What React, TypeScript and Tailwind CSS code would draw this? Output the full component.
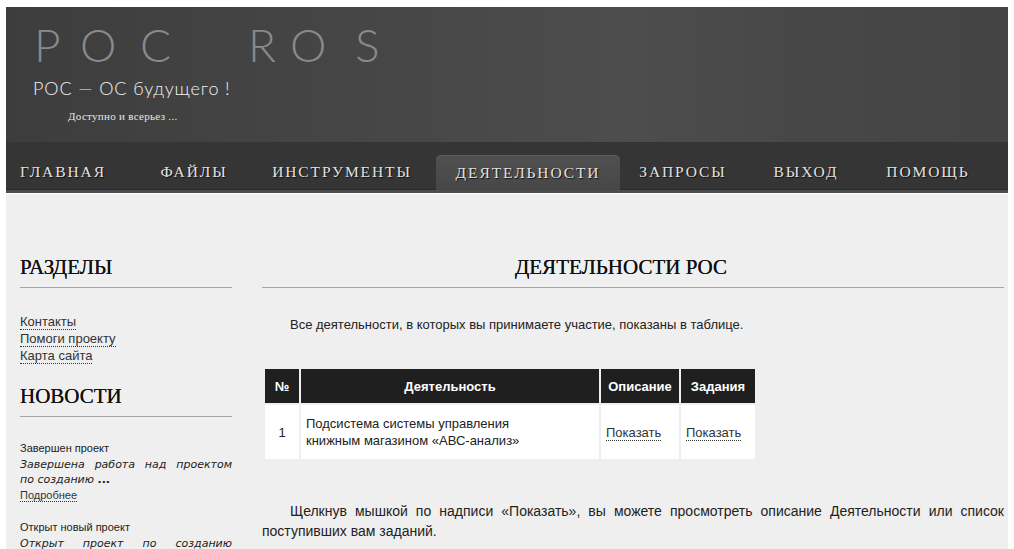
import type { ReactNode } from 'react';

const navItems = [
  { label: 'ГЛАВНАЯ', w: 'w-[134px] pl-[14px] text-left' },
  { label: 'ФАЙЛЫ', w: 'w-[108px] text-center' },
  { label: 'ИНСТРУМЕНТЫ', w: 'w-[188px] text-center' },
  { label: 'ДЕЯТЕЛЬНОСТИ', w: 'w-[184px] text-center', active: true },
  { label: 'ЗАПРОСЫ', w: 'w-[126px] text-center' },
  { label: 'ВЫХОД', w: 'w-[120px] text-center' },
  { label: 'ПОМОЩЬ', w: 'w-[124px] text-center' },
];

// letters of the logo, each with the room it takes before the next one
const logo = [
  { ch: 'P', w: 'w-[46px]' },
  { ch: 'O', w: 'w-[60px]' },
  { ch: 'C', w: 'w-[108px]' },
  { ch: 'R', w: 'w-[42px]' },
  { ch: 'O', w: 'w-[65px]' },
  { ch: 'S', w: 'w-[30px]' },
];

function DotLink({ children }: { children: ReactNode }) {
  return <a className="border-b border-dotted border-[#333] text-[#333]">{children}</a>;
}

function Heading({ children, className = '' }: { children: ReactNode; className?: string }) {
  return (
    <h2
      className={`border-b border-[#a5a5a5] pb-[8px] font-['Liberation_Serif',serif] text-[21px] leading-[24px] text-[#111] [text-shadow:0_0_0.4px_#111] ${className}`}
    >
      {children}
    </h2>
  );
}

function Header() {
  return (
    <header className="h-[135px] bg-[linear-gradient(90deg,#3d3d3d_0%,#474747_40%,#4d4d4d_62%,#474747_80%,#444_100%)] pl-[27px] pt-[14px]">
      <div className="flex h-[48px] items-center pl-[1px] font-['Lato','Open_Sans',sans-serif] text-[46px] font-light leading-none text-[#8a8a8a]">
        {logo.map((l, i) => (
          <span key={i} className={l.w}>{l.ch}</span>
        ))}
      </div>
      <p className="mt-[9px] font-['Lato','Open_Sans',sans-serif] text-[18px] font-light leading-[20px] tracking-[0.9px] text-[#f2f2f2]">
        РОС — ОС будущего !
      </p>
      <p className="mt-[12px] pl-[35px] font-['Liberation_Serif',serif] text-[11px] leading-[12px] tracking-[0.3px] text-[#e6e6e6]">
        Доступно и всерьез ...
      </p>
    </header>
  );
}

function Nav() {
  return (
    <nav className="border-b-[3px] border-[#4d4d4d] bg-[#353535] shadow-[inset_0_-1px_0_#2a2a2a]">
      <ul className="flex h-[48px] items-end">
        {navItems.map((item) => (
          <li
            key={item.label}
            className={`${item.w} h-[35px] pt-[8px] font-['Liberation_Serif',serif] text-[15.5px] leading-[18px] tracking-[1.9px] text-[#e2e2e2] [text-shadow:1px_1px_1px_#111] ${
              item.active ? 'rounded-t-[5px] border-t border-[#5e5e5e] bg-[linear-gradient(#505050,#474747)]' : ''
            }`}
          >
            {item.label}
          </li>
        ))}
      </ul>
    </nav>
  );
}

function Sidebar() {
  return (
    <aside className="w-[212px] shrink-0 pt-[61px] font-['Liberation_Sans',sans-serif]">
      <Heading>РАЗДЕЛЫ</Heading>
      <div className="mt-[25px] text-[13px] leading-[17px]">
        <div><DotLink>Контакты</DotLink></div>
        <div><DotLink>Помоги проекту</DotLink></div>
        <div><DotLink>Карта сайта</DotLink></div>
      </div>
      <Heading className="mt-[20px]">НОВОСТИ</Heading>
      <div className="mt-[24px] text-[11px] leading-[15.5px] text-[#222]">
        <p>Завершен проект</p>
        <p className="font-['DejaVu_Sans',sans-serif] text-[11px] italic text-justify [text-align-last:justify]">
          Завершена работа над проектом
        </p>
        <p className="font-['DejaVu_Sans',sans-serif] text-[11px] italic">
          по созданию <b className="not-italic">...</b>
        </p>
        <DotLink>Подробнее</DotLink>
        <p className="mt-[17px]">Открыт новый проект</p>
        <p className="font-['DejaVu_Sans',sans-serif] text-[11px] italic text-justify [text-align-last:justify]">
          Открыт проект по созданию
        </p>
      </div>
    </aside>
  );
}

function Main() {
  return (
    <section className="min-w-0 flex-1 pt-[61px] font-['Liberation_Sans',sans-serif] text-[#222]">
      <Heading className="pr-[24px] text-center">ДЕЯТЕЛЬНОСТИ РОС</Heading>
      <p className="mt-[28px] indent-[28px] text-[13px] leading-[17px]">
        Все деятельности, в которых вы принимаете участие, показаны в таблице.
      </p>
      <table className="ml-[1px] mt-[34px] border-separate border-spacing-[2px] text-[13px] leading-[17px]">
        <thead>
          <tr className="h-[34px] bg-[#1f1f1f] font-bold text-white">
            <th className="w-[34px]">№</th>
            <th className="w-[298px]">Деятельность</th>
            <th className="w-[78px] px-[2px]">Описание</th>
            <th className="w-[74px] px-[2px]">Задания</th>
          </tr>
        </thead>
        <tbody>
          <tr className="h-[54px] bg-white">
            <td className="text-center">1</td>
            <td className="px-[5px]">
              Подсистема системы управления
              <br />
              книжным магазином «АВС-анализ»
            </td>
            <td className="px-[5px]"><DotLink>Показать</DotLink></td>
            <td className="px-[5px]"><DotLink>Показать</DotLink></td>
          </tr>
        </tbody>
      </table>
      <p className="mt-[40px] indent-[28px] text-justify text-[14px] leading-[20px]">
        Щелкнув мышкой по надписи «Показать», вы можете просмотреть описание Деятельности или список поступивших вам
        заданий.
      </p>
    </section>
  );
}

export default function App() {
  return (
    <div className="min-h-screen bg-white px-[6px] pt-[7px]">
      <Header />
      <Nav />
      <div className="mt-[1px] flex min-h-[400px] gap-[30px] bg-[#efefef] pl-[14px] pr-[4px]">
        <Sidebar />
        <Main />
      </div>
    </div>
  );
}
